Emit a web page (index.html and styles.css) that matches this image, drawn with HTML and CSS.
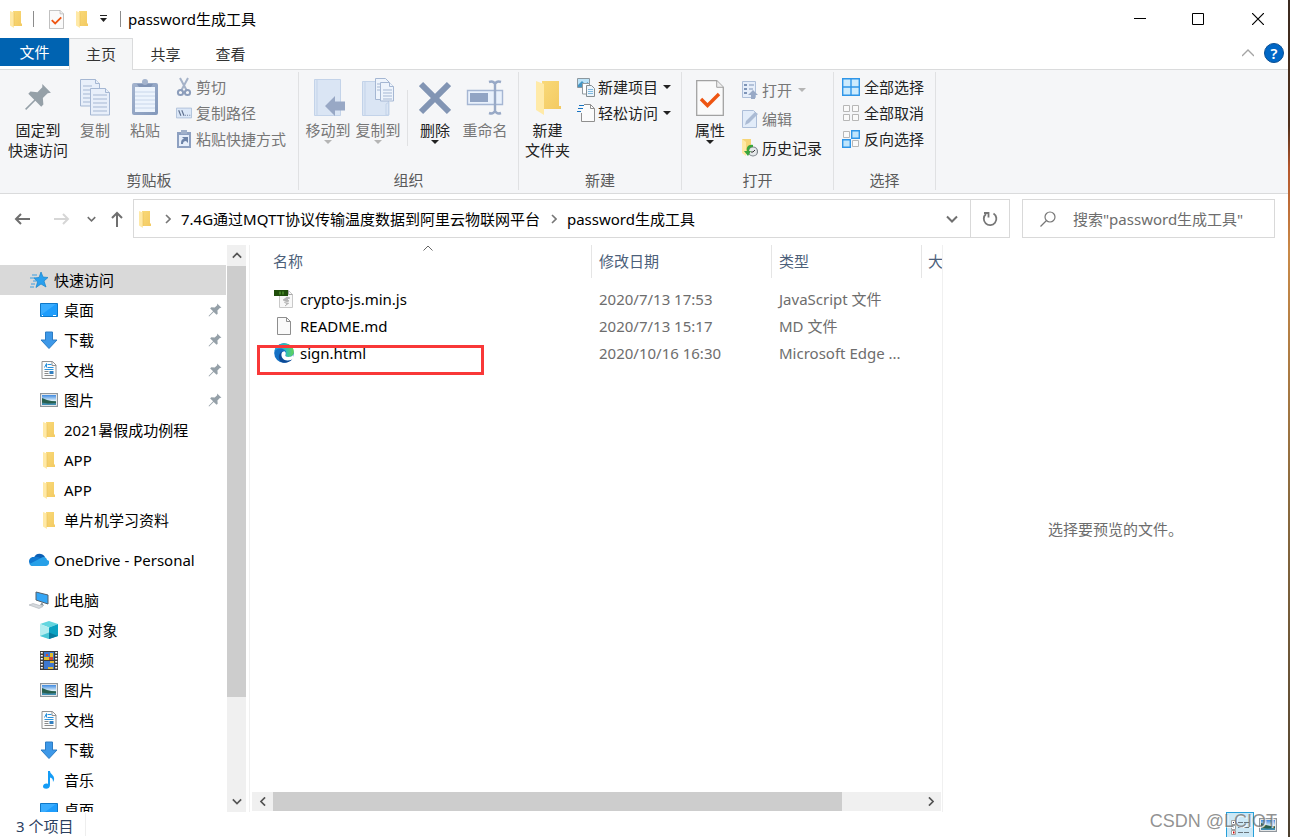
FILE: index.html
```html
<!DOCTYPE html>
<html lang="zh-CN">
<head>
<meta charset="utf-8">
<title>password生成工具</title>
<link rel="stylesheet" href="styles.css">
</head>
<body>
<svg class="defs" aria-hidden="true">
  <defs>
    <linearGradient id="gFolder" x1="0" x2="1" y1="0" y2="1"><stop offset="0" stop-color="#f9d978"/><stop offset="1" stop-color="#f3ca62"/></linearGradient>
    <linearGradient id="gSky" x1="0" x2="0" y1="0" y2="1"><stop offset="0" stop-color="#3f8ae0"/><stop offset=".55" stop-color="#d8ecf8"/><stop offset=".6" stop-color="#4a7f6c"/><stop offset="1" stop-color="#3d8fc0"/></linearGradient>
    <linearGradient id="gEdge" x1="0" x2="1" y1="0" y2="0"><stop offset="0" stop-color="#1b9de2"/><stop offset=".6" stop-color="#2fc0b4"/><stop offset="1" stop-color="#62d455"/></linearGradient>
    <linearGradient id="gPaste" x1="0" x2="1" y1="0" y2="1"><stop offset="0" stop-color="#a3b3ce"/><stop offset="1" stop-color="#8398bb"/></linearGradient>
  </defs>
  <symbol id="folder" viewBox="0 0 12 18"><path d="M3 1h8v12.500h1V16H4z" fill="url(#gFolder)"/><path d="M0 1l4 1.500V18L0 15.500z" fill="#ffe9a6"/><path d="M4 2.500V16" stroke="#e9bf59" stroke-width=".6"/></symbol>
  <symbol id="pin" viewBox="0 0 26 26"><path d="M17 1l8 8-3 .5-4.500 4.500.5 6-2 2-5.500-5.500L2 25l-1-1 8.500-8.500L4 10l2-2 6.500.5L17 4z" fill="#95a0a8"/></symbol>
  <symbol id="check" viewBox="0 0 28 36"><path d="M.7.7h20l6.600 6.600v28H.7z" fill="#fafafa" stroke="#a2a2a2" stroke-width="1.300"/><path d="M20.700.7v6.600h6.600" fill="#eee" stroke="#a2a2a2"/><path d="M5 19l6.500 6.500L23 14" fill="none" stroke="#ee5512" stroke-width="3.400"/></symbol>
  <symbol id="desktop" viewBox="0 0 18 14"><path d="M.5.5h17v13H.5z" fill="#1e9dfc" stroke="#0f78c8"/><path d="M1 12L16 1H1z" fill="#3aadff"/><path d="M2 12.500h1M13 12.500h3" stroke="#fff"/></symbol>
  <symbol id="down" viewBox="0 0 18 18"><path d="M5.500 1h7v8H17l-8 8.500L1 9h4.500z" fill="#3d98e8" stroke="#2c7cc4"/></symbol>
  <symbol id="doc" viewBox="0 0 15 18"><path d="M.5.500h10.500l3.500 3.500v13.500H.5z" fill="#fcfcfc" stroke="#929292"/><path d="M10.500.5v4h4" fill="none" stroke="#929292"/><path d="M3 6.500l2-4v4M6 3.500h4M6 6.500h6M3 8.500h9" fill="none" stroke="#2a92dc"/><path d="M8 10h4v3H8z" fill="#3380c0"/><path d="M3 10.500h4M3 12.500h4M3 14.500h9" stroke="#8b8b8b"/></symbol>
  <symbol id="pic" viewBox="0 0 18 14"><path d="M.6.6h16.800v12.800H.6z" fill="#fff" stroke="#8f969c" stroke-width="1.200"/><path d="M2 2h14v10H2z" fill="url(#gSky)"/><path d="M2 5l5 2 9 2v1l-8 .5-6-1z" fill="#29604f"/></symbol>
  <symbol id="star" viewBox="0 0 18 16"><path d="M11 0l2 5 5 .5-4 3.500 2 6-5-3-5 3.500L7.500 10 4 6l5-.5z" fill="#2aa0ee" stroke="#1682cc" stroke-width=".7"/><path d="M2 3h5M0 6h5M3 9h3M1 12h4M0 15h4" stroke="#3a9fe2"/></symbol>
  <symbol id="cloud" viewBox="0 0 20 14"><path d="M5 5c1-5 8-6 11-1l-3 6z" fill="#0b5fb4"/><path d="M5 4c-3-.5-5 2-5 4.500C0 11 2 13 4 13l9-7c-2-1.500-5-3-8-2z" fill="#1078d0"/><path d="M12 5c3-2.500 6 0 6 2 4 .5 2 6-1 6H4c-2 0-3-1-3.500-2L12 5z" fill="#27a0e8"/></symbol>
  <symbol id="pc" viewBox="0 0 20 18"><path d="M7 1l12 3v9L7 9z" fill="#34a6f6" stroke="#53616d"/><path d="M13 11l-2 3 4 1z" fill="#8b979f"/><path d="M0 14l4-1.500 10 3-4 2z" fill="#d6dade" stroke="#a9afb5" stroke-width=".6"/></symbol>
  <symbol id="cube" viewBox="0 0 18 18"><path d="M9 0l9 3-9 3.500L0 3z" fill="#63d6df"/><path d="M0 3l9 3.500V18l-9-3z" fill="#b2edf0"/><path d="M18 3L9 6.500V18l9-3z" fill="#0ba2c2"/><path d="M0 15l9-3.500V18z" fill="#4bc8d6"/><path d="M18 15l-9-3.500V18z" fill="#087b9e"/></symbol>
  <symbol id="film" viewBox="0 0 18 19"><path d="M0 0h18v19H0z" fill="#3c3c3c"/><path d="M4 1h10v8H4zM4 10h10v8H4z" fill="#3e78cf"/><path d="M4 6h5v3H4zM10 2h3v4h-3z" fill="#e0be2c"/><path d="M9 6h4v3H9zM6 3h2v2H6z" fill="#d34831"/><path d="M8 16h5v2H8zM10 10h4v2h-4z" fill="#e3b932"/><path d="M1.800 1v18M16.200 1v18" stroke="#fff" stroke-width="2" stroke-dasharray="1.500 1.500"/></symbol>
  <symbol id="music" viewBox="0 0 12 18"><path d="M5 0h2c0 3.500 5 4 4 9l-1 2c0-3-1-4-3-4.500V14c0 5-7 4.500-7 1.500 0-2.500 3-3.500 5-2.500z" fill="#149cf6"/></symbol>
  <symbol id="chev" viewBox="0 0 12 8"><path d="M1 1.500l5 5 5-5" fill="none" stroke="currentColor" stroke-width="2"/></symbol>
  <symbol id="arrow" viewBox="0 0 16 12"><path d="M7 1L2 6l5 5M2 6h14" fill="none" stroke="currentColor" stroke-width="2"/></symbol>
</svg>

<div class="screen">
<main class="window">
  <header class="titlebar">
    <svg class="i-folder"><use href="#folder"/></svg>
    <span class="rule"></span>
    <button class="plain" aria-label="属性"><svg width="15" height="19"><use href="#check"/></svg></button>
    <button class="plain" aria-label="新建文件夹"><svg class="i-folder"><use href="#folder"/></svg></button>
    <button class="plain" aria-label="自定义快速访问工具栏"><svg width="8" height="8" viewBox="0 0 8 8"><path d="M0 .5h7" stroke="#222"/><path d="M0 3h7L3.500 7z" fill="#222"/></svg></button>
    <span class="rule"></span>
    <h1>password生成工具</h1>
    <div class="winbtns">
      <button aria-label="最小化"><svg width="12" height="12"><path d="M0 5.500h12" stroke="#000"/></svg></button>
      <button aria-label="最大化"><svg width="12" height="12"><path d="M.5.500h11v11H.5z" fill="none" stroke="#000"/></svg></button>
      <button aria-label="关闭"><svg width="12" height="12"><path d="M0 0l12 12M12 0L0 12" stroke="#000" stroke-width="1.200"/></svg></button>
    </div>
  </header>

  <nav class="tabs">
    <button class="tab file">文件</button>
    <button class="tab active">主页</button>
    <button class="tab">共享</button>
    <button class="tab">查看</button>
    <div class="tabtools">
      <button class="plain" aria-label="最小化功能区"><svg width="12" height="8" viewBox="0 0 12 8"><path d="M0 7l6-6 6 6" fill="none" stroke="#a4a4a4" stroke-width="1.400"/></svg></button>
      <button class="help" aria-label="帮助">?</button>
    </div>
  </nav>

  <section class="ribbon">
    <div class="group g-clip">
      <div class="tools">
        <button class="big pinbtn"><span class="ico"><svg width="28" height="28"><use href="#pin"/></svg></span>固定到<br>快速访问</button>
        <button class="big dim"><span class="ico"><svg width="32" height="38" viewBox="0 0 32 38"><g fill="#e8effa" stroke="#a5b7d3"><path d="M1.500 1.500h15l4 4V28h-19z"/><path d="M16.500 1.500v4h4M4 8h9M4 12h9M4 16h7M4 20h7M4 24h7"/><path d="M11.500 10.500h15l4 4V37h-19z"/><path d="M26.500 10.500v4h4M14 17h14M14 21h14M14 25h14M14 29h14M14 33h14"/></g></svg></span>复制</button>
        <button class="big dim"><span class="ico"><svg width="28" height="38" viewBox="0 0 28 38"><rect x="1" y="5" width="26" height="32" rx="2" fill="url(#gPaste)"/><path d="M4 9h20v25H4z" fill="#edf4fd"/><path d="M4 14h20M4 18h20M4 22h20M4 26h20M4 30h20" stroke="#c8d6ea"/><path d="M6 6h16l-2 3H8z" fill="#7f93b5"/><circle cx="14" cy="4" r="3" fill="#a3b3cd"/></svg></span>粘贴</button>
        <div class="smalls">
          <button class="small dim"><svg width="16" height="20" viewBox="0 0 16 20"><path d="M4 1l7 13M12 1L5 14" stroke="#a5b2c8" stroke-width="2"/><circle cx="4.500" cy="15.500" r="2.600" fill="none" stroke="#8c9dbb" stroke-width="2"/><circle cx="11.500" cy="15.500" r="2.600" fill="none" stroke="#8c9dbb" stroke-width="2"/></svg>剪切</button>
          <button class="small dim"><svg width="16" height="12" viewBox="0 0 18 12"><path d="M.5.5h17v11H.5z" fill="#dbe7f7" stroke="#abbdd8"/><path d="M3 3l2.500 6M6.500 3L9 9" stroke="#60718f" stroke-width="1.300"/><path d="M10 8.500h6" stroke="#60718f" stroke-dasharray="1 1.500" stroke-width="1.300"/></svg>复制路径</button>
          <button class="small dim"><svg width="16" height="20" viewBox="0 0 16 20"><path d="M1 3h14v16H1z" fill="#8da0c1"/><path d="M3 6h10v11H3z" fill="#e6eefa"/><path d="M5 1h6v4H5z" fill="#a0b0ca"/><path d="M5 15c0-4 1-5 3-5L6 8h6v6l-2-2c-2 0-3 1-3 3z" fill="#6d83a8"/></svg>粘贴快捷方式</button>
        </div>
      </div>
      <h2>剪贴板</h2>
    </div>
    <div class="group g-org">
      <div class="tools">
        <button class="big dim"><span class="ico"><svg width="34" height="38" viewBox="0 0 34 38"><path d="M3.500 1.500h26v36h-26z" fill="#dae5f4" stroke="#c3d3e9"/><path d="M6 1.500v36" stroke="#c3d3e9"/><path d="M14 28l10-10v5.500h10v9H24V38z" fill="#98a8c5"/></svg></span>移动到<i class="caret"></i></button>
        <button class="big dim"><span class="ico"><svg width="34" height="38" viewBox="0 0 34 38"><path d="M1.500 3.500h26v34h-26z" fill="#dae5f4" stroke="#c3d3e9"/><path d="M4 3.500v34M25 37V26l3-2v13z" stroke="#c3d3e9" fill="none"/><g fill="#eef4fc" stroke="#a5b7d3"><path d="M14.500.5h10l4 4v17h-14z"/><path d="M19.500 4.500h9l4 4V23h-13z"/><path d="M28.500 4.500v4h4M22 12h9M22 15h9M22 18h9M22 21h9M16 6h3M16 9h3M16 12h3"/></g></svg></span>复制到<i class="caret"></i></button>
        <span class="inner-rule"></span>
        <button class="big"><span class="ico"><svg width="32" height="38" viewBox="0 0 32 38"><path d="M2 6l28 28M30 6L2 34" stroke="#8295b4" stroke-width="6"/></svg></span>删除<i class="caret"></i></button>
        <button class="big dim"><span class="ico"><svg width="38" height="38" viewBox="0 0 38 38"><path d="M1.500 12.500h35v14h-35z" fill="#e9f1fc" stroke="#a5b6d3" stroke-width="1.400"/><path d="M4 15h18v9H4z" fill="#91a4c4"/><path d="M23 4c3-1 5 0 6 2 1-2 3-3 6-2M29 5v29M23 35c3 1 5 0 6-2 1 2 3 3 6 2" fill="none" stroke="#98a9c6" stroke-width="2.400"/></svg></span>重命名</button>
      </div>
      <h2>组织</h2>
    </div>
    <div class="group g-new">
      <div class="tools">
        <button class="big"><span class="ico"><svg width="26" height="38" viewBox="0 0 26 38"><path d="M7 3h17v25h2v3H8z" fill="url(#gFolder)"/><path d="M1 3l8 3v31l-8-5z" fill="#ffeaa8"/></svg></span>新建<br>文件夹</button>
        <div class="smalls">
          <button class="small"><svg width="18" height="20" viewBox="0 0 18 20"><path d="M.5 1.500h12v9H.5z" fill="#bce3f8" stroke="#8b979f"/><path d="M1 8l4-4 3 3 3-2v5H1z" fill="#4596c4"/><path d="M5.500 6.500h7V17h-7z" fill="#fff" stroke="#929ba0"/><path d="M9.500 8.500h5l3 3v8h-8z" fill="#eaf4fc" stroke="#858d91"/><path d="M11 12.500h5M11 14.500h5M11 16.500h5" stroke="#80b9df"/></svg>新建项目<i class="caret"></i></button>
          <button class="small"><svg width="18" height="20" viewBox="0 0 18 20"><path d="M4.500 10V1.500h9l4 4v13h-13V10" fill="#fbfbfb" stroke="none"/><path d="M7 1.500h6.500l4 4v13h-13V10" fill="none" stroke="#8f8f8f"/><path d="M13.500 1.500v4h4" fill="none" stroke="#8f8f8f"/><path d="M2 2.500h5M1 5.500h5M0 8.500h4" stroke="#1874c2"/></svg>轻松访问<i class="caret"></i></button>
        </div>
      </div>
      <h2>新建</h2>
    </div>
    <div class="group g-open">
      <div class="tools">
        <button class="big"><span class="ico"><svg width="28" height="38" viewBox="0 0 28 38"><use href="#check" y="2" width="28" height="36"/></svg></span>属性<i class="caret"></i></button>
        <div class="smalls">
          <button class="small dim"><svg width="16" height="20" viewBox="0 0 16 20"><path d="M.5 1.500h13v16H.5z" fill="#e6eefa" stroke="#aebfd9"/><path d="M2 4h3v2H2zM2 8h3v2H2zM2 12h3v2H2z" fill="#7f95b8"/><path d="M7 5h5M7 9h4" stroke="#7f95b8"/><path d="M11 10l5 5h-3v4H9v-4H6z" fill="#98a9c6"/></svg>打开<i class="caret"></i></button>
          <button class="small dim"><svg width="16" height="20" viewBox="0 0 16 20"><path d="M.5 1.500h11l3 3v14H.5z" fill="#e2ecf9" stroke="#adbed8"/><path d="M3 16l1-4 9-9 3 2-9 9z" fill="#abbbd4"/></svg>编辑</button>
          <button class="small"><svg width="16" height="20" viewBox="0 0 16 20"><path d="M0 1h9v14H0z" fill="#f6d577"/><path d="M0 1l4 3v14l-4-3z" fill="#ffe9a4"/><circle cx="11" cy="13.500" r="4.500" fill="#e5e8ea" stroke="#7c858b" stroke-width="1.200"/><path d="M11 14l2-2M11 14H9" stroke="#333"/><path d="M11 7c-5-1-7 3-6 6H2l4 5 3-5H7c0-2 1-4 4-4z" fill="#3aa53c"/></svg>历史记录</button>
        </div>
      </div>
      <h2>打开</h2>
    </div>
    <div class="group g-sel">
      <div class="tools">
        <div class="smalls">
          <button class="small"><svg width="18" height="18" viewBox="0 0 18 18"><path d="M.7.7h16.600v16.600H.7zM9 1v16M1 9h16" fill="#cdebfd" stroke="#2f96e8" stroke-width="1.400"/></svg>全部选择</button>
          <button class="small"><svg width="18" height="18" viewBox="0 0 18 18"><path d="M1.500 1.500h6v6h-6zM10.500 1.500h6v6h-6zM1.500 10.500h6v6h-6zM10.500 10.500h6v6h-6z" fill="#fafafa" stroke="#b7b7b7"/></svg>全部取消</button>
          <button class="small"><svg width="18" height="18" viewBox="0 0 18 18"><path d="M1.500 1.500h6v6h-6zM10.500 10.500h6v6h-6z" fill="#fafafa" stroke="#b7b7b7"/><path d="M9.700.7h7.600v7.600H9.700zM.7 9.700h7.600v7.600H.7z" fill="#bfe5fc" stroke="#2f96e8" stroke-width="1.400"/></svg>反向选择</button>
        </div>
      </div>
      <h2>选择</h2>
    </div>
  </section>

  <section class="address">
    <div class="history">
      <button class="plain" aria-label="后退"><svg width="16" height="12"><use href="#arrow"/></svg></button>
      <button class="plain faint" aria-label="前进"><svg width="16" height="12" viewBox="0 0 16 12"><path d="M9 1l5 5-5 5M14 6H0" fill="none" stroke="currentColor" stroke-width="2"/></svg></button>
      <button class="plain" aria-label="最近浏览的位置"><svg width="9" height="6"><use href="#chev"/></svg></button>
      <button class="plain" aria-label="上移"><svg width="12" height="16" viewBox="0 0 12 16"><path d="M1 7l5-5 5 5M6 2v14" fill="none" stroke="currentColor" stroke-width="2"/></svg></button>
    </div>
    <div class="path">
      <div class="crumbs">
        <svg class="i-folder"><use href="#folder"/></svg>
        <svg class="sep" width="6" height="10" viewBox="0 0 6 10"><path d="M1 1l4 4-4 4" fill="none" stroke="#777" stroke-width="1.600"/></svg>
        <a href="#parent">7.4G通过MQTT协议传输温度数据到阿里云物联网平台</a>
        <svg class="sep" width="6" height="10" viewBox="0 0 6 10"><path d="M1 1l4 4-4 4" fill="none" stroke="#777" stroke-width="1.600"/></svg>
        <a href="#here">password生成工具</a>
        <button class="plain drop" aria-label="以前的位置"><svg width="12" height="8"><use href="#chev"/></svg></button>
      </div>
      <button class="refresh" aria-label="刷新"><svg width="16" height="16" viewBox="0 0 16 16"><path d="M11.500 2.500A6.300 6.300 0 1 1 4 3M2 2h4.500v4.500" fill="none" stroke="#767676" stroke-width="1.800"/></svg></button>
    </div>
    <label class="search">
      <svg width="16" height="16" viewBox="0 0 16 16"><circle cx="10" cy="6" r="5" fill="none" stroke="#777" stroke-width="1.200"/><path d="M6.500 9.500L.5 15.500" stroke="#777" stroke-width="1.200"/></svg>
      <input type="search" aria-label="搜索" placeholder='搜索"password生成工具"'>
    </label>
  </section>

  <section class="body">
    <nav class="tree">
      <ul>
        <li class="root current"><a href="#quick"><svg width="18" height="16"><use href="#star"/></svg>快速访问</a></li>
        <li><a href="#d"><svg width="18" height="14"><use href="#desktop"/></svg>桌面<svg class="pinned"><use href="#pin"/></svg></a></li>
        <li><a href="#d"><svg width="18" height="18"><use href="#down"/></svg>下载<svg class="pinned"><use href="#pin"/></svg></a></li>
        <li><a href="#d"><svg width="18" height="18"><use href="#doc"/></svg>文档<svg class="pinned"><use href="#pin"/></svg></a></li>
        <li><a href="#d"><svg width="18" height="14"><use href="#pic"/></svg>图片<svg class="pinned"><use href="#pin"/></svg></a></li>
        <li><a href="#d"><svg width="18" height="18"><use href="#folder"/></svg>2021暑假成功例程</a></li>
        <li><a href="#d"><svg width="18" height="18"><use href="#folder"/></svg>APP</a></li>
        <li><a href="#d"><svg width="18" height="18"><use href="#folder"/></svg>APP</a></li>
        <li><a href="#d"><svg width="18" height="18"><use href="#folder"/></svg>单片机学习资料</a></li>
        <li class="root spaced"><a href="#od"><svg width="20" height="14"><use href="#cloud"/></svg>OneDrive - Personal</a></li>
        <li class="root spaced"><a href="#pc"><svg width="20" height="18"><use href="#pc"/></svg>此电脑</a></li>
        <li><a href="#d"><svg width="18" height="18"><use href="#cube"/></svg>3D 对象</a></li>
        <li><a href="#d"><svg width="18" height="19"><use href="#film"/></svg>视频</a></li>
        <li><a href="#d"><svg width="18" height="14"><use href="#pic"/></svg>图片</a></li>
        <li><a href="#d"><svg width="18" height="18"><use href="#doc"/></svg>文档</a></li>
        <li><a href="#d"><svg width="18" height="18"><use href="#down"/></svg>下载</a></li>
        <li><a href="#d"><svg width="18" height="18"><use href="#music"/></svg>音乐</a></li>
        <li><a href="#d"><svg width="18" height="14"><use href="#desktop"/></svg>桌面</a></li>
      </ul>
    </nav>
    <div class="vbar">
      <button aria-label="向上滚动"><svg class="up" width="10" height="7"><use href="#chev"/></svg></button>
      <div class="track"><div class="thumb"></div></div>
      <button aria-label="向下滚动"><svg width="10" height="7"><use href="#chev"/></svg></button>
    </div>
    <section class="files">
      <svg class="sort" width="10" height="6" viewBox="0 0 10 6"><path d="M.5 5.500L5 1l4.500 4.500" fill="none" stroke="#666"/></svg>
      <div class="list">
        <table>
          <colgroup><col class="c-name"><col class="c-date"><col class="c-type"><col></colgroup>
          <thead><tr><th scope="col"><span>名称</span></th><th scope="col"><span>修改日期</span></th><th scope="col"><span>类型</span></th><th scope="col" class="last"><span>大</span></th></tr></thead>
          <tbody>
            <tr><td><div class="name"><svg width="20" height="20" viewBox="0 0 20 20"><path d="M5.500 1.500h9l4 4v13h-13z" fill="#f8f8f8" stroke="#c9c9c9"/><path d="M14.500 1.500v4h4" fill="none" stroke="#aaa"/><path d="M0 1h14v6H0z" fill="#1f4d0b"/><path d="M6 2.500v3M9 2.500v3" stroke="#63b53d"/><path d="M13 8l-4 3 4 2 2-1-2-2 3-1zM10 13l3 2-2 2 4-3" fill="#b5b5b5" stroke="#aaa" stroke-width=".6"/></svg>crypto-js.min.js</div></td><td>2020/7/13 17:53</td><td>JavaScript 文件</td><td></td></tr>
            <tr><td><div class="name"><svg width="20" height="20" viewBox="0 0 20 20"><path d="M3.500 1.500h9l4 4v13h-13z" fill="#fafafa" stroke="#8e8e8e"/><path d="M12.500 1.500v4h4" fill="none" stroke="#8e8e8e"/></svg>README.md</div></td><td>2020/7/13 15:17</td><td>MD 文件</td><td></td></tr>
            <tr><td><div class="name"><svg width="20" height="20" viewBox="0 0 20 20"><circle cx="10" cy="10" r="9.800" fill="#1470c4"/><path d="M.3 9C1 4 5 .2 10 .2c6 0 9.800 4 9.800 8.500 0 3.500-3 5.300-5.500 5.300-2 0-3-.8-3-1.500 0-.6.900-1 .900-2.500C12.200 7 9 5.500 6.500 5.500 3 5.500.8 7.500.3 9z" fill="url(#gEdge)"/><path d="M7.500 10c-1 4 2 7.500 6 7.500 2 0 4-.8 5-2-1 2.500-5 4.500-8.500 4.300C5 19.500 4 14 5.500 11c1-2 3-3 4.500-3-1 .3-2 .8-2.500 2z" fill="#0c4a96"/><path d="M11.300 12.500c0 .7 1 1.500 3 1.500 2 0 4-1 4.700-2v3.500c-1 1-3 2-5.500 2-4 0-7-3.500-5.800-7.500.5-1 1.500-1.800 2.800-1.800 2 1 1.200 2.800.8 4.300z" fill="#fff"/></svg>sign.html</div></td><td>2020/10/16 16:30</td><td>Microsoft Edge ...</td><td></td></tr>
          </tbody>
        </table>
      </div>
      <div class="marker"></div>
      <div class="hbar">
        <button aria-label="向左滚动"><svg class="left" width="10" height="7"><use href="#chev"/></svg></button>
        <div class="track"><div class="thumb"></div></div>
        <button aria-label="向右滚动"><svg class="right" width="10" height="7"><use href="#chev"/></svg></button>
      </div>
    </section>
    <aside class="preview">选择要预览的文件。</aside>
  </section>

  <footer class="status">
    <span class="count">3 个项目</span>
    <div class="views">
      <button class="on" aria-label="详细信息"><svg width="18" height="16" viewBox="0 0 18 16"><path d="M.5.500h4v4h-4zM.5 5.500h4v4h-4zM.5 10.500h4v4h-4z" fill="#fff" stroke="#a0a0a0"/><path d="M2 2.500h1M2 7.500h1" stroke="#336"/><path d="M2 12.500h1.500" stroke="#c00" stroke-width="2"/><path d="M7 2.500h11M7 7.500h11M7 12.500h11" stroke="#68757c" stroke-dasharray="5 1"/></svg></button>
      <button aria-label="大图标"><svg width="18" height="14"><use href="#pic"/></svg></button>
    </div>
    <span class="watermark">CSDN @LCIOT</span>
  </footer>
</main>
</div>
</body>
</html>
```

FILE: styles.css
```css
* { box-sizing: border-box; }
body {
  margin: 0;
  font: 15px/20px "Noto Sans", "Noto Sans CJK SC", sans-serif;
  color: #000;
}
svg { display: block; flex: none; }
button { font: inherit; color: inherit; border: 0; padding: 0; background: none; }
a { color: inherit; text-decoration: none; }
h1, h2 { margin: 0; font: inherit; }
.defs { position: absolute; width: 0; height: 0; }

.screen {
  height: 100vh;
  padding-right: 2px;
  background: linear-gradient(#3a2a20 0, #50301c 15%, #b5562c 20%, #c98a48 30%, #8a6a3e 60%, #4c4030 100%);
}
.window { height: 100%; display: flex; flex-direction: column; background: #fff; overflow: hidden; }
.i-folder { width: 12px; height: 18px; }

/* title bar */
.titlebar { display: flex; align-items: center; height: 38px; padding-left: 10px; flex: none; }
.rule { width: 1px; height: 16px; background: #8c8c8c; margin: 0 7px 0 11px; }
.titlebar .plain { margin-left: 8px; }
.titlebar .plain + .plain { margin-left: 12px; }
.titlebar .plain + .rule { margin-left: 12px; }
.winbtns { margin-left: auto; display: flex; }
.winbtns button { width: 58px; height: 38px; display: grid; place-items: center; }
.winbtns button:last-child { width: 61px; }

/* tabs */
.tabs { display: flex; height: 32px; flex: none; border-bottom: 1px solid #dadbdc; }
.tab { width: 65px; height: 31px; color: #333; }
.tab.file { width: 69px; height: 28px; background: #0063b1; color: #fff; }
.tab.active { width: 64px; height: 32px; padding-bottom: 2px; background: #f5f6f7; border: 1px solid #dadbdc; border-bottom: 0; }
.tabtools { margin-left: auto; display: flex; align-items: center; gap: 10px; padding: 0 4px 1px 0; }
.help { width: 20px; height: 20px; border-radius: 50%; background: #0067c6; color: #fff; font-weight: 600; border: 1px solid #0a4f94; line-height: 18px; }

/* ribbon */
.ribbon { display: flex; height: 124px; flex: none; background: #f5f6f8; border-bottom: 1px solid #dadbdc; padding: 2px 0 3px; }
.group { display: flex; flex-direction: column; justify-content: space-between; border-right: 1px solid #e0e1e3; }
.group h2 { text-align: center; color: #5a5a5a; }
.tools { display: flex; align-items: flex-start; }
.g-clip { width: 299px; }
.g-org { width: 220px; }
.g-new { width: 163px; }
.g-open { width: 152px; }
.g-sel { width: 102px; }
.g-org .tools, .g-new .tools { padding-left: 4px; }
.g-open .tools { padding-left: 6px; }
.g-sel .tools { padding-left: 8px; }
.big { width: 50px; padding-top: 6px; white-space: nowrap; color: #222; text-align: center; }
.big .ico { height: 42px; display: grid; place-items: center; align-content: center; padding-bottom: 4px; }
.pinbtn { width: 76px; margin-right: -6px; }
.g-new .big { width: 49px; }
.g-open .big { width: 44px; }
.big.dim, .small.dim { color: #777; }
.caret { display: block; width: 0; height: 0; margin: 0 auto; border: solid transparent; border-width: 4px 4px 0; border-top-color: #222; }
.dim .caret { border-top-color: #b5b5b5; }
.inner-rule { width: 1px; height: 56px; margin: 18px 2px 0 4px; background: #e0e1e3; }
.smalls { display: flex; flex-direction: column; padding-top: 5px; gap: 6px; }
.g-clip .smalls { padding-left: 6px; }
.g-new .smalls { padding-left: 5px; }
.g-open .smalls { padding: 8px 0 0 10px; gap: 9px; }
.small { display: flex; align-items: center; gap: 4px; height: 20px; color: #222; white-space: nowrap; }
.small .caret { margin: 0 0 0 2px; }
.g-new .small { gap: 3px; }

/* address bar */
.address { display: flex; height: 51px; padding: 5px 13px 7px 0; flex: none; }
.history { width: 133px; display: flex; align-items: center; padding-left: 14px; color: #6f6f6f; }
.history button { margin-right: 24px; }
.history button:nth-child(2) { margin-right: 17px; }
.history button:nth-child(3) { margin-right: 15px; }
.history button:nth-child(4) { margin-right: 0; }
.history .faint { color: #d6d6d6; }
.path { flex: 1; min-width: 0; display: flex; border: 1px solid #d9d9d9; margin-right: 12px; }
.crumbs { flex: 1; min-width: 0; display: flex; align-items: center; padding-left: 5px; white-space: nowrap; }
.crumbs .sep { margin: 0 10px 0 14px; }
.crumbs a + .sep { margin-left: 11px; }
.drop { margin: 0 12px 0 auto; color: #6f6f6f; }
.refresh { width: 39px; border-left: 1px solid #d9d9d9; display: grid; place-items: center; }
.search { width: 253px; display: flex; align-items: center; gap: 17px; padding: 0 17px; border: 1px solid #d9d9d9; }
.search input { flex: 1; min-width: 0; border: 0; padding: 0; outline: 0; font: inherit; background: none; }
.search input::placeholder { color: #6d6d6d; opacity: 1; }

/* panes */
.body { flex: 1; min-height: 0; display: flex; }
.tree { width: 227px; overflow: hidden; padding-right: 1px; }
.tree ul { list-style: none; margin: 0; padding: 20px 0 0; }
.tree a { display: flex; align-items: center; gap: 6px; height: 30px; padding: 0 4px 0 40px; white-space: nowrap; }
.tree .root a { padding-left: 30px; gap: 5px; }
.tree .current a { gap: 6px; }
.tree .spaced { margin-top: 10px; }
.tree .spaced a { padding-left: 29px; }
.current { background: #d9d9d9; }
.tree .pinned { width: 14px; height: 14px; margin-left: auto; }
.vbar { width: 19px; display: flex; flex-direction: column; background: #f0f0f0; color: #555; }
.vbar button { height: 21px; display: grid; place-items: center; }
.track { flex: 1; }
.thumb { background: #cdcdcd; }
.vbar .thumb { height: 82%; }
.up { transform: rotate(180deg); }
.left { transform: rotate(90deg); }
.right { transform: rotate(-90deg); }
.files { position: relative; flex: 1; min-width: 0; margin-left: 3px; border-left: 1px solid #f0f0f0; border-right: 1px solid #f0f0f0; display: flex; flex-direction: column; }
.list { flex: 1; min-height: 0; overflow: hidden; }
table { width: 100%; table-layout: fixed; border-collapse: collapse; color: #6d6d6d; }
.c-name { width: 342px; }
.c-date { width: 180px; }
.c-type { width: 150px; }
th { padding: 0 0 7px; font-weight: 400; text-align: left; color: #4c607a; }
th span { display: block; height: 33px; line-height: 33px; padding-left: 7px; border-right: 1px solid #e5e5e5; white-space: nowrap; }
th:first-child span { padding-left: 23px; }
th.last span { padding-left: 6px; border: 0; }
td { height: 27px; padding: 0 0 0 7px; white-space: nowrap; }
td:first-child { padding-left: 24px; }
.name { display: flex; align-items: center; gap: 6px; color: #000; }
.sort { position: absolute; left: 173px; top: 0; }
.marker { position: absolute; left: 7px; top: 100px; width: 227px; height: 30px; border: 3px solid #f93838; }
.hbar { height: 19px; margin: 0 1px 1px 2px; display: flex; background: #f0f0f0; color: #555; }
.hbar button { width: 21px; display: grid; place-items: center; }
.hbar .thumb { width: 88%; height: 100%; }
.preview { width: 345px; display: grid; place-items: center; color: #6d6d6d; }

/* status bar */
.status { position: relative; height: 25px; flex: none; display: flex; align-items: center; justify-content: space-between; padding: 0 11px 0 16px; color: #2b405f; }
.count { padding: 3px 12px 0 0; border-right: 1px solid #eee; }
.views { display: flex; align-items: center; gap: 5px; height: 100%; }
.views button { height: 25px; display: grid; place-items: center; }
.views .on { width: 28px; padding-top: 6px; background: #cce8f6; border: 1px solid #26a0da; border-bottom: 0; }
.watermark { position: absolute; right: 11px; bottom: 4px; font: 18px/24px "Liberation Sans", sans-serif; color: rgba(110, 110, 110, .75); text-shadow: 1px 1px 0 rgba(255, 255, 255, .8); }
```
